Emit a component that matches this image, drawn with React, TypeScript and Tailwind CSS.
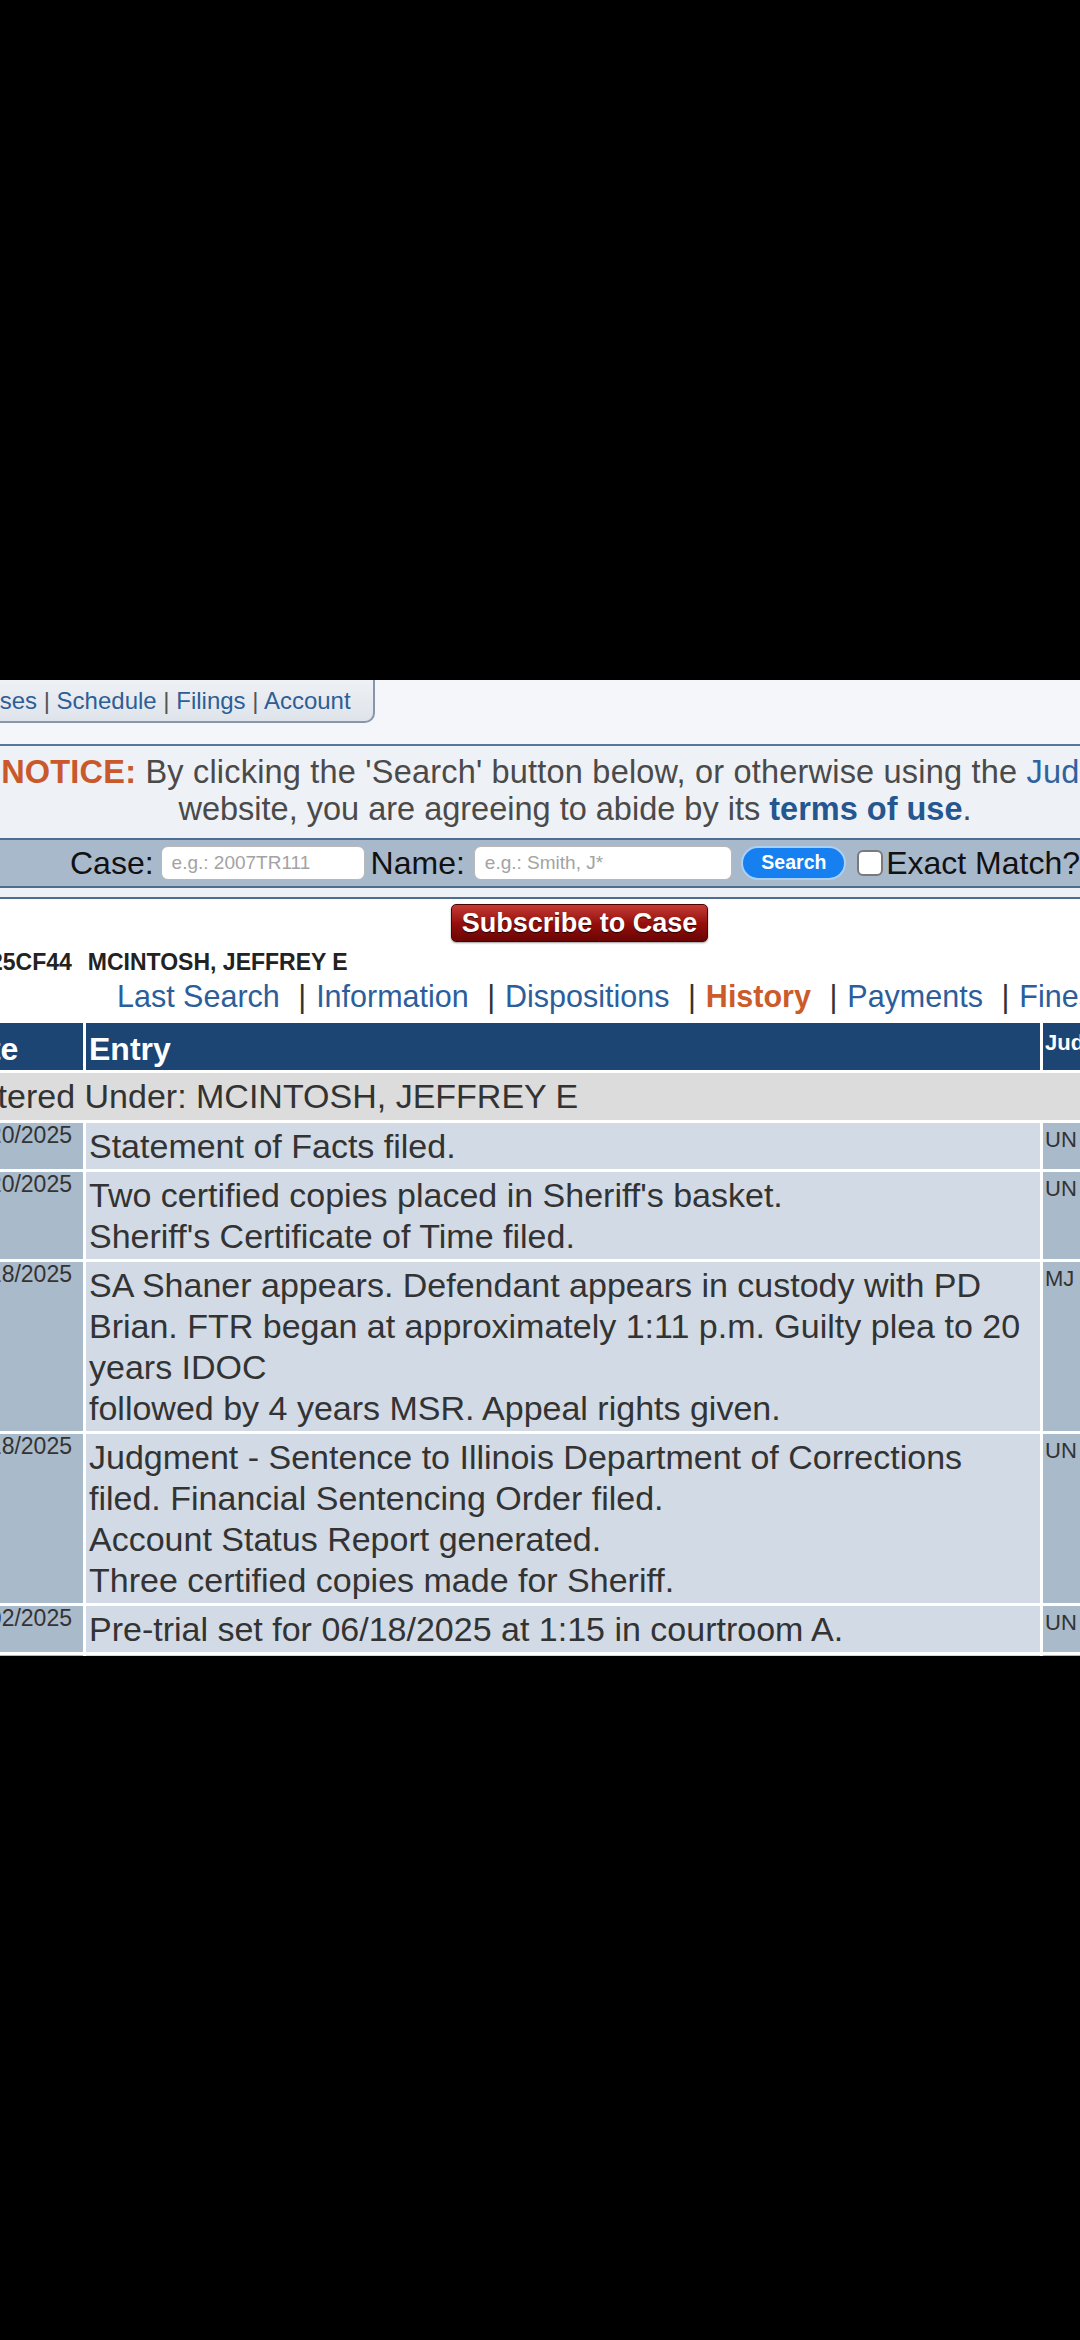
import React from 'react';

const rows = [
  { date: '06/20/2025', judge: 'UN', lines: ['Statement of Facts filed.'] },
  {
    date: '06/20/2025',
    judge: 'UN',
    lines: ["Two certified copies placed in Sheriff's basket.", "Sheriff's Certificate of Time filed."],
  },
  {
    date: '06/18/2025',
    judge: 'MJ',
    lines: [
      'SA Shaner appears. Defendant appears in custody with PD',
      'Brian. FTR began at approximately 1:11 p.m. Guilty plea to 20',
      'years IDOC',
      'followed by 4 years MSR. Appeal rights given.',
    ],
  },
  {
    date: '06/18/2025',
    judge: 'UN',
    lines: [
      'Judgment - Sentence to Illinois Department of Corrections',
      'filed. Financial Sentencing Order filed.',
      'Account Status Report generated.',
      'Three certified copies made for Sheriff.',
    ],
  },
  { date: '06/02/2025', judge: 'UN', lines: ['Pre-trial set for 06/18/2025 at 1:15 in courtroom A.'] },
  { date: '05/22/2025', judge: 'UN', lines: ['Defendant arraigned.'] },
];

const caseLinks = ['Last Search', 'Information', 'Dispositions', 'History', 'Payments', 'Fines'];

function TopTabs() {
  const items = ['Cases', 'Schedule', 'Filings', 'Account'];
  return (
    <div className="h-[64px] bg-[#f4f6f9]">
      <div className="inline-flex h-[43px] items-center -ml-[31px] pr-[22px] bg-gradient-to-b from-[#eef1f5] to-[#dfe4eb] border-r-2 border-b-2 border-[#8796aa] rounded-br-[10px] text-[24px] whitespace-nowrap">
        <span>
          {items.map((item, i) => (
            <React.Fragment key={item}>
              {i > 0 && <span className="text-[#555]">{' | '}</span>}
              <span className="text-[#2d5e96]">{item}</span>
            </React.Fragment>
          ))}
        </span>
      </div>
    </div>
  );
}

function Notice() {
  return (
    <div className="h-[94px] border-t-2 border-[#56779b] bg-[#eef1f6] overflow-hidden">
      <div className="w-[1150px] pt-[8px] text-center text-[32.5px] leading-[37px] text-[#4a4a4a] whitespace-nowrap">
        <div className="-mx-[100px] pr-[38px] tracking-[0.2px]">
          <span className="font-bold text-[#c9582b]">NOTICE:</span> By clicking the 'Search' button below, or
          otherwise using the <span className="text-[#2f63a0]">Judici</span>
        </div>
        <div>
          website, you are agreeing to abide by its <span className="font-bold text-[#245690]">terms of use</span>.
        </div>
      </div>
    </div>
  );
}

function SearchBar() {
  return (
    <>
      <div className="h-[50px] border-y-2 border-[#4d6d91] bg-[#a9b9cc] flex items-center pl-[70px] text-[32px] text-[#111] whitespace-nowrap">
        <span>Case:</span>
        <input
          readOnly
          placeholder="e.g.: 2007TR111"
          className="ml-[7px] w-[204px] h-[34px] rounded-[7px] bg-white border border-[#b8b8b8] pl-[10px] text-[19px] placeholder:text-[#a3a3a3] outline-none"
        />
        <span className="ml-[6px]">Name:</span>
        <input
          readOnly
          placeholder="e.g.: Smith, J*"
          className="ml-[9px] w-[261px] h-[34px] rounded-[7px] bg-white border border-[#b8b8b8] pl-[10px] text-[19px] placeholder:text-[#a3a3a3] outline-none"
        />
        <button className="ml-[9px] w-[106px] h-[34px] rounded-full bg-[#1680f0] border-2 border-[#a9d1f7] text-white font-bold text-[19.5px] leading-none">
          Search
        </button>
        <span className="ml-[11px] w-[26px] h-[26px] rounded-[6px] bg-white border-2 border-[#7a7a7a]" />
        <span className="ml-[3px]">Exact Match?</span>
      </div>
      <div className="h-[11px] bg-[#eef2f7] border-b-2 border-[#4d6d91]" />
    </>
  );
}

function CaseHeader() {
  return (
    <>
      <div className="pt-[5px]">
        <button className="ml-[451px] w-[257px] h-[38px] rounded-[5px] bg-gradient-to-b from-[#c43a35] via-[#970f0c] to-[#6a0505] border border-[#4a0303] text-white font-bold text-[27px] leading-none [text-shadow:0_1px_1px_rgba(0,0,0,0.7)] shadow-[0_1px_2px_rgba(0,0,0,0.4)]">
          Subscribe to Case
        </button>
      </div>
      <div className="mt-[7px] -ml-[10px] text-[23px] leading-[26px] font-bold text-[#222] whitespace-nowrap">
        <span className="mr-[16px]">25CF44</span>MCINTOSH, JEFFREY E
      </div>
      <div className="mt-[4px] pl-[117px] text-[30.5px] leading-[34px] whitespace-nowrap">
        {caseLinks.map((link, i) => (
          <React.Fragment key={link}>
            {i > 0 && <span className="text-[#333] px-[1.5px]">{'\u00a0 |\u00a0'}</span>}
            <span className={link === 'History' ? 'font-bold text-[#cc5b2c]' : 'text-[#2b5e9b]'}>{link}</span>
          </React.Fragment>
        ))}
      </div>
    </>
  );
}

function HistoryTable() {
  return (
    <table className="mt-[7px] -ml-[57px] w-[1240px] table-fixed border-separate border-spacing-[3px] bg-white">
      <colgroup>
        <col className="w-[137px]" />
        <col className="w-[954px]" />
        <col className="w-[137px]" />
      </colgroup>
      <thead>
        <tr className="h-[47px] bg-[#1c4574] text-white font-bold">
          <th className="text-left align-bottom pl-[3px] pb-[2px] text-[32px] leading-[37px]">Date</th>
          <th className="text-left align-bottom pl-[3px] pb-[2px] text-[32px] leading-[37px]">Entry</th>
          <th className="text-left align-top pl-[2px] pt-[7px] text-[22px] leading-[26px]">Judge</th>
        </tr>
      </thead>
      <tbody className="text-[#333]">
        <tr>
          <td colSpan={3} className="bg-[#dcdcdc] pl-[10px] py-[3px] text-[34px] leading-[41px] whitespace-nowrap">
            Entered Under: MCINTOSH, JEFFREY E
          </td>
        </tr>
        {rows.map((row, i) => (
          <tr key={i}>
            <td className="bg-[#a9bacb] align-top text-right pr-[11px] pt-0 text-[23px] leading-[24px]">
              {row.date}
            </td>
            <td className="bg-[#d1dae5] align-top pl-[3px] pt-[3px] pb-[2px] text-[34px] leading-[41px] whitespace-nowrap overflow-hidden">
              {row.lines.map((line, j) => (
                <div key={j}>{line}</div>
              ))}
            </td>
            <td className="bg-[#a9bacb] align-top pl-[2px] pt-[4px] text-[22px] leading-[26px]">{row.judge}</td>
          </tr>
        ))}
      </tbody>
    </table>
  );
}

export default function App() {
  return (
    <div className="w-[1080px] h-[2340px] bg-black overflow-hidden font-['Liberation_Sans',Arial,Helvetica,sans-serif]">
      <div className="h-[680px]" />
      <div className="h-[976px] bg-white overflow-hidden">
        <TopTabs />
        <Notice />
        <SearchBar />
        <CaseHeader />
        <HistoryTable />
      </div>
    </div>
  );
}
